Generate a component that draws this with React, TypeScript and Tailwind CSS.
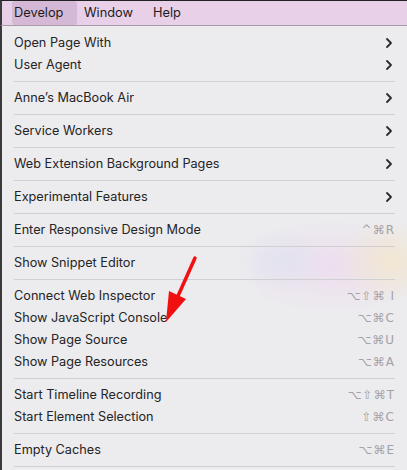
const items: (null | { label: string; sub?: boolean; keys?: string })[] = [
  { label: "Open Page With", sub: true },
  { label: "User Agent", sub: true },
  null,
  { label: "Anne’s MacBook Air", sub: true },
  null,
  { label: "Service Workers", sub: true },
  null,
  { label: "Web Extension Background Pages", sub: true },
  null,
  { label: "Experimental Features", sub: true },
  null,
  { label: "Enter Responsive Design Mode", keys: "^⌘R" },
  null,
  { label: "Show Snippet Editor" },
  null,
  { label: "Connect Web Inspector", keys: "⌥⇧⌘ I" },
  { label: "Show JavaScript Console", keys: "⌥⌘C" },
  { label: "Show Page Source", keys: "⌥⌘U" },
  { label: "Show Page Resources", keys: "⌥⌘A" },
  null,
  { label: "Start Timeline Recording", keys: "⌥⇧⌘T" },
  { label: "Start Element Selection", keys: "⇧⌘C" },
  null,
  { label: "Empty Caches", keys: "⌥⌘E" },
  null,
]

function Chevron() {
  return (
    <svg width="8" height="12" viewBox="0 0 8 12" className="mr-[2px]">
      <path d="M2 2 L6 6 L2 10" fill="none" stroke="#2b2b2b" strokeWidth="1.8" strokeLinecap="round" strokeLinejoin="round" />
    </svg>
  )
}

export default function App() {
  return (
    <div className="relative w-[407px] h-[470px] overflow-hidden bg-[#ecebee] font-['Inter','DejaVu_Sans',sans-serif] text-[12.7px] text-[#242424]">
      {/* Menu bar */}
      <div className="h-[26px] border-t border-[#222] border-l-2 border-l-[#3a3a3a] border-b border-b-[#a99aa9] bg-[#e8d0e8] flex items-stretch pl-[10px] text-[12.8px] text-[#1c1c1c]">
        <div className="pl-[2px] w-[65px] mr-[7px] bg-[#d5b8d6] rounded-[3px] flex items-center">Develop</div>
        <div className="w-[69px] flex items-center">Window</div>
        <div className="flex items-center">Help</div>
      </div>

      {/* Menu */}
      <div className="relative h-[444px] border-l-2 border-[#3a3a3a] pt-[6px] pl-[12px] pr-[12px]">
        <div className="pointer-events-none absolute left-[250px] top-[185px] w-[200px] h-[110px] rounded-full bg-[radial-gradient(ellipse_at_40%_50%,rgba(238,210,238,0.55),rgba(236,235,238,0)_60%)]" />
        <div className="pointer-events-none absolute left-[330px] top-[190px] w-[120px] h-[90px] rounded-full bg-[radial-gradient(ellipse_at_center,rgba(245,232,190,0.6),rgba(236,235,238,0)_65%)]" />
        <div className="pointer-events-none absolute left-[230px] top-[200px] w-[100px] h-[70px] rounded-full bg-[radial-gradient(ellipse_at_center,rgba(215,225,240,0.5),rgba(236,235,238,0)_65%)]" />
        <div className="relative">
          {items.map((it, i) =>
            it === null ? (
              <div key={i} className="h-[11px] flex items-center">
                <div className="h-px w-full bg-[#d0cfd2]" />
              </div>
            ) : (
              <div key={i} className="h-[22px] flex items-center justify-between">
                <span>{it.label}</span>
                {it.sub && <Chevron />}
                {it.keys && (
                  <span className="text-[12px] text-[#a3a2a6] tracking-[1px] font-['DejaVu_Sans','Inter',sans-serif]">{it.keys}</span>
                )}
              </div>
            )
          )}
        </div>
      </div>

      {/* Red arrow annotation */}
      <svg className="absolute left-0 top-0" width="407" height="470" viewBox="0 0 407 470">
        <line x1="195" y1="258" x2="178" y2="296" stroke="#f01010" strokeWidth="3.5" strokeLinecap="round" />
        <polygon points="166,322 169,291 186,299" fill="#f01010" />
      </svg>
    </div>
  )
}
